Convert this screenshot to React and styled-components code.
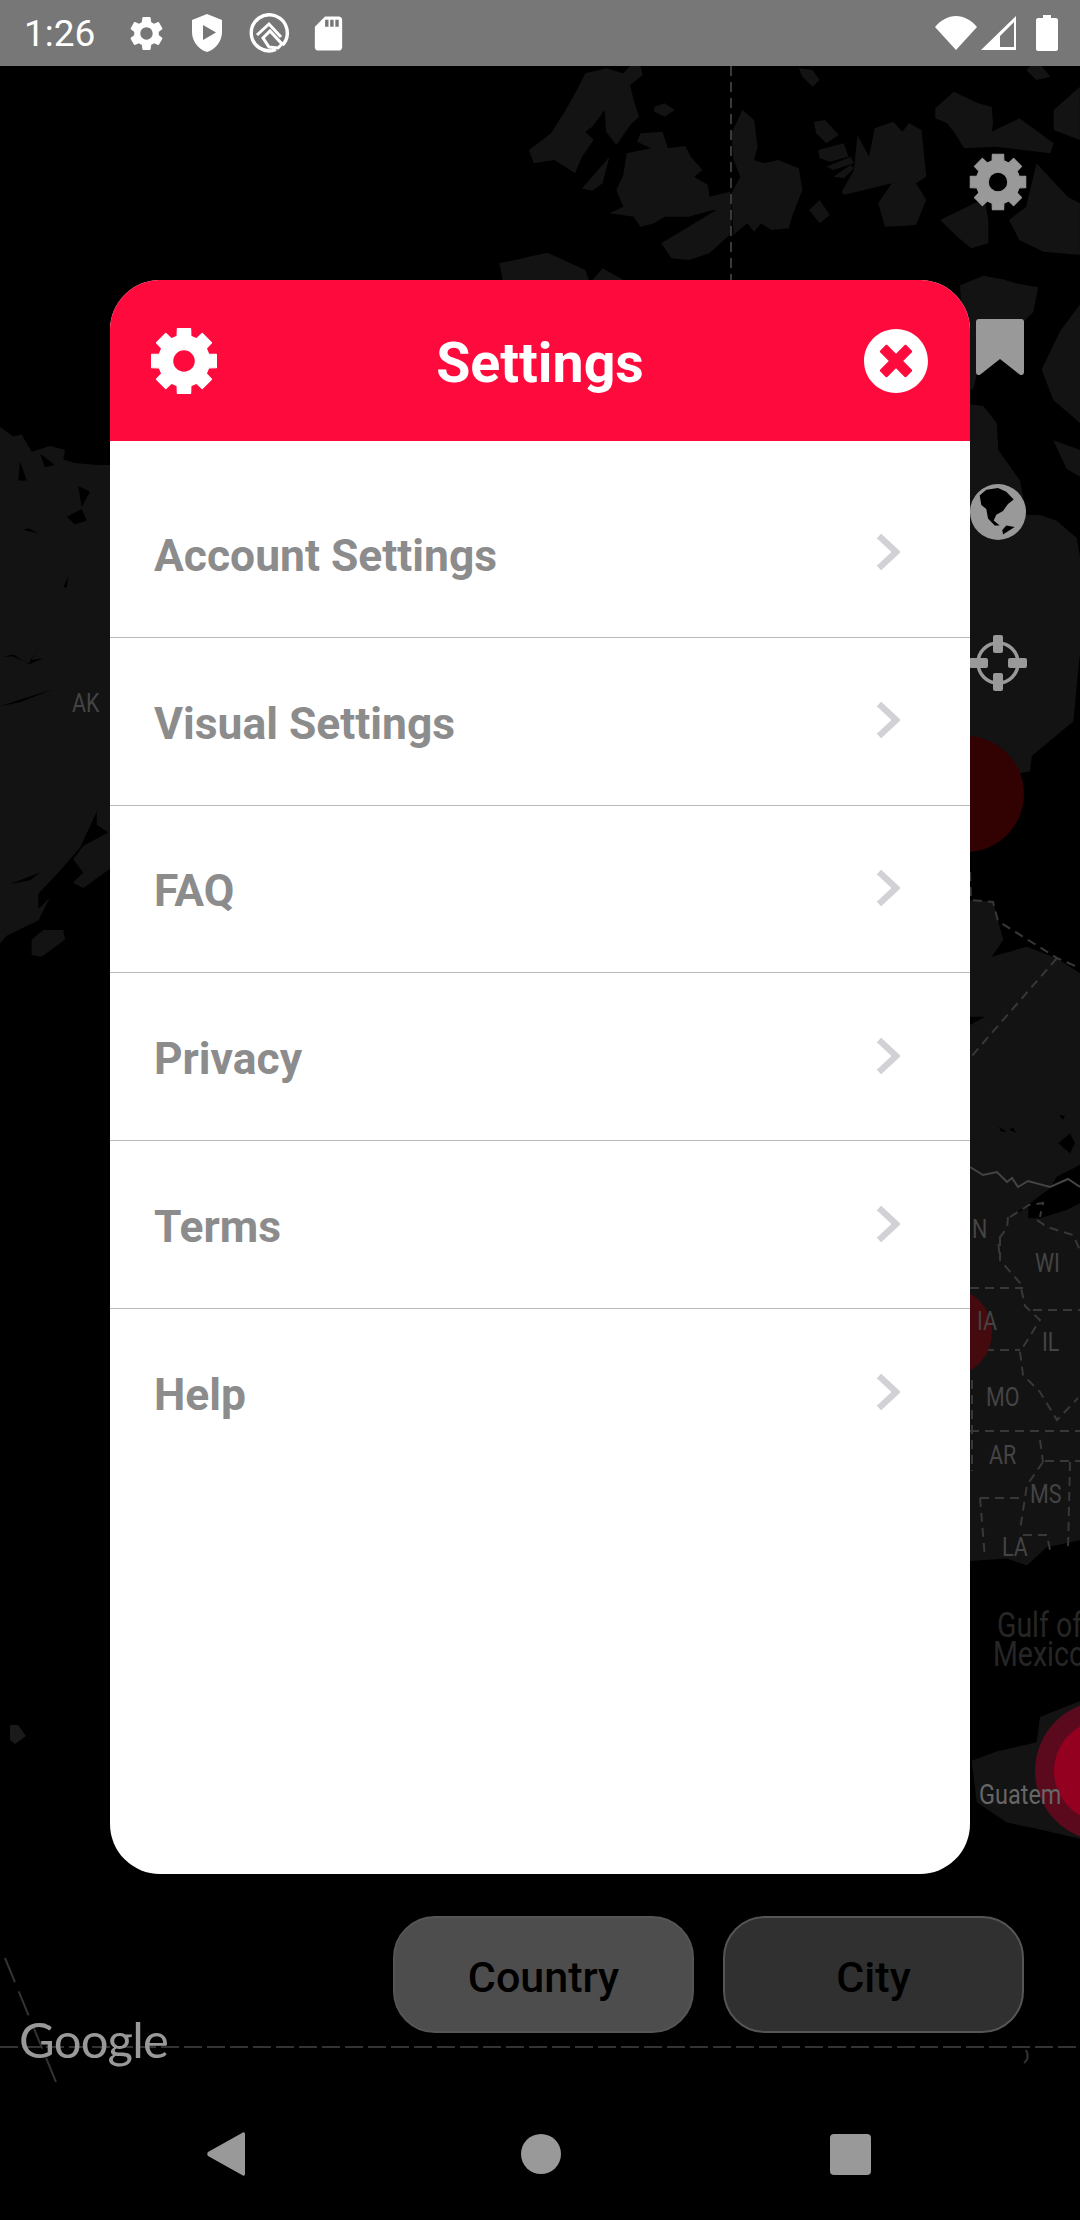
import React from 'react';
import styled, { createGlobalStyle } from 'styled-components';
import { FaTimesCircle } from 'react-icons/fa';
import { MdSettings, MdSdCard } from 'react-icons/md';

const GlobalStyle = createGlobalStyle`
  html, body {
    margin: 0;
    padding: 0;
    background: #000000;
  }
`

const Screen = styled.div`
  background-color: #000000;
  display: flex;
  flex-direction: column;
  font-family: Roboto, "Liberation Sans", sans-serif;
  height: 2220px;
  overflow: hidden;
  width: 1080px;
`

const StatusBar = styled.div`
  align-items: center;
  background-color: #777777;
  color: #ffffff;
  display: flex;
  flex-shrink: 0;
  height: 66px;
  padding: 0 22px 0 24px;
  position: relative;
  z-index: 2;
`

const Clock = styled.div`
  font-size: 37px;
  font-weight: 400;
  margin-right: 31px;
  width: 71px;
`

const StatusIcons = styled.div`
  align-items: center;
  display: flex;
  gap: 24px;
`

const SdSlot = styled.div`
  display: flex;
  margin-left: -5px;
`

const SystemIcons = styled.div`
  align-items: center;
  display: flex;
  gap: 4px;
  margin-left: auto;
`

const BatterySlot = styled.div`
  display: flex;
  margin-left: 16px;
`

const Stage = styled.div`
  display: flex;
  flex: 1;
  flex-direction: column;
  padding-top: 214px;
  position: relative;
`

const MapCanvas = styled.svg`
  height: 2154px;
  left: 0;
  position: absolute;
  top: 0;
  width: 1080px;
`

const MapControl = styled.div`
  align-items: center;
  color: #999999;
  display: flex;
  height: 60px;
  justify-content: center;
  left: 968px;
  position: absolute;
  top: ${props => props.top}px;
  width: 60px;
`

const Modal = styled.div`
  background-color: #ffffff;
  border-radius: 50px;
  display: flex;
  flex-direction: column;
  height: 1594px;
  margin-left: 110px;
  overflow: hidden;
  position: relative;
  width: 860px;
`

const ModalHeader = styled.div`
  align-items: center;
  background-color: #ff0a3c;
  color: #ffffff;
  display: flex;
  flex-shrink: 0;
  height: 161px;
  justify-content: space-between;
  padding: 0 41px 0 39px;
`

const ModalTitle = styled.h1`
  font-size: 55.5px;
  font-weight: 700;
  margin: 0 0 0 -2px;
  padding-top: 6px;
`

const SettingsList = styled.div`
  display: flex;
  flex-direction: column;
  padding-top: 29px;
`

const SettingsRow = styled.div`
  align-items: center;
  border-bottom: ${props => props.last ? 'none' : '1px solid #bbbbbb'};
  box-sizing: border-box;
  color: #8c8c8c;
  display: flex;
  height: 167.8px;
  justify-content: space-between;
  padding: 0 70px 0 44px;
`

const RowLabel = styled.span`
  font-size: 44.4px;
  font-weight: 700;
  padding-top: 5px;
`

const RowChevron = styled.svg`
  height: 38px;
  margin-bottom: 2px;
  width: 24px;
`

const ToggleRow = styled.div`
  display: flex;
  gap: 29px;
  justify-content: flex-end;
  margin-top: 42px;
  padding-right: 56px;
  position: relative;
`

const Toggle = styled.div`
  align-items: center;
  background-color: ${props => props.active ? '#4d4d4d' : '#303030'};
  border: 2px solid #555555;
  border-radius: 42px;
  box-sizing: border-box;
  color: #000000;
  display: flex;
  font-family: Roboto, "Liberation Sans", sans-serif;
  font-size: 43px;
  font-weight: 500;
  height: 117px;
  justify-content: center;
  padding-top: 4px;
  width: 301px;
`

const GoogleMark = styled.div`
  color: #999999;
  font-family: Lato, "Open Sans", sans-serif;
  font-size: 49px;
  left: 19px;
  letter-spacing: -0.8px;
  line-height: 1;
  position: absolute;
  top: 1949px;
`

const NavBar = styled.div`
  align-items: center;
  box-sizing: border-box;
  display: flex;
  flex-shrink: 0;
  height: 126px;
  justify-content: space-between;
  padding: 0 209px 6px 207px;
  position: relative;
`

const NavCircle = styled.div`
  background-color: #999999;
  border-radius: 50%;
  height: 40px;
  margin-left: 6px;
  width: 40px;
`

const NavSquare = styled.div`
  background-color: #999999;
  border-radius: 4px;
  height: 41px;
  width: 41px;
`

const rows = ['Account Settings', 'Visual Settings', 'FAQ', 'Privacy', 'Terms', 'Help']

// map shapes were traced on zoomed crops, so each group keeps its crop's scale
const fromCrop = (ox, oy, sx, sy) => pts => pts.split(' ').map(p => {
  const [x, y] = p.split(',').map(Number)
  return `${(ox + x / sx).toFixed(1)},${(oy + y / sy).toFixed(1)}`
}).join(' ')

const top = fromCrop(0, 60, 1.452, 3)
const east = fromCrop(840, 270, 3, 2.613)
const west = fromCrop(0, 400, 3, 2.613)
const lakes = fromCrop(960, 860, 3, 3)
const south = fromCrop(940, 1150, 3, 2.178)

const land = [
  top('850,40 880,25 905,40 915,18 930,18 933,45 915,75 920,120 928,170 915,195 895,255 880,215 878,150 860,200 850,215 862,240 845,290 835,340 805,300 775,310 768,270 800,220 820,155 835,100'),
  top('950,140 965,130 980,150 965,170 950,155'),
  top('930,220 962,215 970,265 995,258 1003,290 1020,330 1008,350 1028,375 1030,410 1060,395 1060,450 1035,450 1000,470 965,470 950,490 930,500 920,470 885,460 905,440 895,390 905,345 910,280 945,265 925,245'),
  top('960,550 1000,500 1040,450 1062,410 1062,520 1030,580 1000,600 975,595'),
  top('845,385 885,290 875,370 860,392'),
  top('1062,220 1078,150 1095,180 1100,260 1095,300 1110,310 1130,300 1160,325 1165,390 1150,470 1145,505 1120,510 1105,490 1095,515 1085,490 1065,525 1062,400 1075,350 1065,300'),
  top('1160,25 1180,30 1190,60 1180,80 1165,50'),
  top('1182,185 1198,180 1218,225 1200,250 1185,220'),
  top('1188,270 1225,250 1232,290 1205,305 1190,295'),
  top('1200,320 1235,290 1240,310 1210,330'),
  top('1210,350 1235,315 1240,325 1225,355'),
  top('1222,395 1240,330 1245,225 1262,290 1270,205 1297,185 1310,215 1320,190 1338,210 1345,350 1330,370 1345,420 1330,495 1285,500 1275,430 1295,370 1225,405'),
  top('1175,450 1190,420 1205,465 1190,490'),
  top('1358,145 1385,95 1420,130 1440,140 1442,190 1440,215 1480,175 1500,205 1530,250 1525,280 1465,265 1445,260 1400,265 1385,215 1375,190 1358,175'),
  top('1365,480 1415,430 1430,420 1435,480 1435,550 1410,565 1390,530'),
  top('1465,480 1490,440 1505,310 1550,410 1568,430 1568,585 1540,580 1515,575 1480,540'),
  top('1530,150 1568,80 1568,240 1530,210'),
  top('1490,30 1505,0 1525,50 1505,60'),
  top('725,610 795,578 850,630 855,660 730,660'),
  top('860,660 875,625 905,660'),
  east('360,40 430,15 490,25 530,35 595,45 580,110 510,170 430,210 400,310 380,320'),
  east('720,90 660,160 605,260 640,340 720,400'),
  east('640,445 720,470 720,540 680,520'),
  east('380,350 430,355 470,400 475,470 540,550 560,640 600,640 650,655 710,700 720,750 720,1000 700,1180 575,1270 570,1310 380,1340'),
  lakes('30,120 100,125 115,185 130,240 95,290 200,260 290,295 360,340 360,1200 30,1200'),
  south('90,0 420,0 420,850 320,865 260,905 200,890 90,895'),
  south('95,1330 170,1310 290,1290 300,1235 420,1200 420,1500 300,1480 200,1465 110,1420'),
  west('0,70 40,95 65,90 95,135 150,120 195,130 190,155 225,165 290,170 330,170 330,1225 250,1275 215,1260 150,1300 115,1360 20,1400 0,1420'),
  west('95,1410 130,1385 190,1385 195,1410 125,1455 95,1450'),
]

const holes = [
  west('0,800 160,755 60,790'),
  west('190,490 205,460 200,490'),
  west('235,225 270,240 245,280'),
  west('200,305 245,285 260,315 225,325'),
  west('30,1265 120,1235 90,1255'),
  west('115,1290 180,1230 240,1170 290,1075 290,1110 325,1130 250,1165 220,1200 250,1235 220,1260 150,1300 115,1330'),
  west('70,340 115,348 85,335'),
  west('10,670 40,670 90,690 130,675 90,680 115,650 85,690 40,665'),
  west('60,160 80,210 55,210'),
  west('120,140 165,170 135,175'),
  lakes('30,470 75,470 30,495'),
  lakes('295,850 330,820 345,850 330,880'),
  lakes('360,915 290,950 270,985 360,960'),
  lakes('150,1070 210,1030 270,985 360,940 360,1030 320,1050 240,1075 205,1075 205,1040'),
  lakes('115,800 140,815 125,815'),
  lakes('148,810 158,802 168,818'),
  lakes('298,765 315,768 308,780'),
]

const stateLines = [
  'M970 872L971 900 993 902 998 921 1057 958 1080 968',
  'M1057 958L970 1058',
  'M1010 1217L1029 1205 1043 1203 1040 1217M1037 1220L1047 1227 1073 1235 1080 1250M1008 1217L1007 1228 998 1240 1000 1260',
  'M1000 1237V1260L1020 1283 1025 1306 1040 1320 1020 1352 1023 1375 1040 1392 1057 1420 1078 1398M970 1288H1023M1033 1310H1080M970 1350H1020',
  'M970 1431H1080M972 1380V1471M1040 1440L1043 1462M1043 1462L1027 1485 1020 1530M1045 1461H1080M1070 1462L1068 1550M980 1498H1023M980 1498L985 1558M1023 1535H1047L1050 1550',
]

const gearPath = (teeth, outer, root, hole) => {
  const step = (Math.PI * 2) / teeth
  const at = (r, a) => `${(r * Math.cos(a)).toFixed(2)} ${(r * Math.sin(a)).toFixed(2)}`
  let d = ''
  for (let i = 0; i < teeth; i++) {
    const a = i * step
    d += `${i ? 'L' : 'M'}${at(root, a - 0.27)}L${at(outer, a - 0.2)}L${at(outer, a + 0.2)}L${at(root, a + 0.27)}`
  }
  return `${d}ZM${hole} 0A${hole} ${hole} 0 1 0 ${-hole} 0A${hole} ${hole} 0 1 0 ${hole} 0Z`
}

// labels on the reference map are drawn taller than wide
const MapLabel = ({ x, y, size = 21.5, stretch = 1.2, fill = '#444444', children }) => (
  <text transform={`translate(${x} ${y}) scale(1 ${stretch})`} fontSize={size} fill={fill} fontFamily="Roboto, sans-serif">{children}</text>
)

const MapBackground = () => (
  <MapCanvas viewBox="0 66 1080 2154">
    {land.map(points => <polygon key={points} points={points} fill="#131313" />)}
    {holes.map(points => <polygon key={points} points={points} fill="#000000" />)}
    <polygon points="10,1725 18,1725 26,1736 15,1744 10,1740" fill="#1a1a1a" />
    <path d="M731 66V280" stroke="#3a3a3a" strokeWidth="2" strokeDasharray="10 6" fill="none" />
    <path d="M0 2047H1080" stroke="#333333" strokeWidth="2" strokeDasharray="18 5" fill="none" />
    <path d="M5 1958L58 2087" stroke="#333333" strokeWidth="2" strokeDasharray="26 10" fill="none" />
    <path d="M1026 2050C1029 2056 1028 2060 1024 2063" stroke="#333333" strokeWidth="2" fill="none" />
    <path d="M970 1167L983 1175 997 1172 1007 1182 1012 1178 1018 1187 1028 1181 1050 1187 1068 1179 1080 1187" stroke="#444444" strokeWidth="2" fill="none" />
    {stateLines.map(d => <path key={d} d={d} stroke="#383838" strokeWidth="2" strokeDasharray="9 6" fill="none" />)}
    <circle cx="966" cy="794" r="58" fill="#320202" />
    <circle cx="947" cy="1332" r="45" fill="#450a0e" />
    <circle cx="1105" cy="1771" r="70" fill="#5a0a1c" />
    <circle cx="1105" cy="1771" r="51" fill="#940020" />
    <MapLabel x="72" y="712">AK</MapLabel>
    <MapLabel x="972" y="1238">N</MapLabel>
    <MapLabel x="1035" y="1272">WI</MapLabel>
    <MapLabel x="977" y="1330">IA</MapLabel>
    <MapLabel x="1042" y="1351">IL</MapLabel>
    <MapLabel x="986" y="1406">MO</MapLabel>
    <MapLabel x="989" y="1464">AR</MapLabel>
    <MapLabel x="1030" y="1503">MS</MapLabel>
    <MapLabel x="1002" y="1556">LA</MapLabel>
    <MapLabel x="997" y="1637" size={28.5} stretch={1.25} fill="#262626">Gulf of</MapLabel>
    <MapLabel x="993" y="1666" size={28.5} stretch={1.25} fill="#262626">Mexico</MapLabel>
    <MapLabel x="979" y="1804" size={23.5} stretch={1.15} fill="#666666">Guatem</MapLabel>
  </MapCanvas>
)

const GearIcon = ({ size, color }) => (
  <svg width={size} height={size} viewBox="-52 -52 104 104">
    <path d={gearPath(8, 49, 38, 17)} fill={color} fillRule="evenodd" stroke={color} strokeWidth="2" strokeLinejoin="round" />
  </svg>
)

const ShieldIcon = () => (
  <svg width="32" height="38" viewBox="0 0 32 38">
    <path fill="#ffffff" fillRule="evenodd" d="M16 0L31 6V18C31 27 25 35 16 38 7 35 1 27 1 18V6ZM12 11V26L25 18.5Z" />
  </svg>
)

const QIcon = () => (
  <svg width="42" height="40" viewBox="-2 0 42 40" fill="none" stroke="#ffffff" strokeWidth="3.4">
    <path d="M33.5 32A18 18 0 1 0 27 36.5" />
    <path d="M8 22L20 11 32 24" strokeWidth="3" />
    <path d="M14 25L21 18 33 31 29 35 20 34Z" strokeWidth="3" />
  </svg>
)

const WifiIcon = () => (
  <svg width="42" height="34" viewBox="0 0 42 34">
    <path fill="#ffffff" d="M0 11C6 4 13 0 21 0S36 4 42 11L21 34Z" />
  </svg>
)

const SignalIcon = () => (
  <svg width="35" height="34" viewBox="0 0 35 34">
    <path fill="#ffffff" fillRule="evenodd" d="M35 0V34H0ZM33 6L19 20V31H33Z" />
  </svg>
)

const BatteryIcon = () => (
  <svg width="22" height="36" viewBox="0 0 22 36">
    <path fill="#ffffff" d="M7 0H15V3H20C21 3 22 4 22 5V34C22 35 21 36 20 36H2C1 36 0 35 0 34V5C0 4 1 3 2 3H7Z" />
  </svg>
)

const Chevron = () => (
  <RowChevron viewBox="0 0 24 38">
    <path d="M3 3L20 19 3 35" fill="none" stroke="#d1d1d6" strokeWidth="6.5" />
  </RowChevron>
)

const BookmarkIcon = () => (
  <svg width="51" height="56" viewBox="-3 0 51 56">
    <path fill="#999999" d="M3 0H45C47 0 48 1 48 3V53C48 56 45 57 43 55L24 40 5 55C3 57 0 56 0 53V3C0 1 1 0 3 0Z" />
  </svg>
)

const GlobeIcon = () => (
  <svg width="60" height="60" viewBox="0 0 60 60">
    <circle cx="30" cy="30" r="28" fill="#999999" />
    <path fill="#000000" d="M11.7 13.5L18.3 7.8 30 5.9 38.3 9.7 45.7 17.4 40 22 35 28.9 28.3 32.7 25.7 38.4 31.7 43.4 26.7 43.4 20 36.5 18.3 27 13.3 23Z" />
    <path fill="#000000" d="M35 52.6L46.7 44.9 38.3 43.4 34.3 48Z" />
  </svg>
)

const TargetIcon = () => (
  <svg width="60" height="60" viewBox="0 0 60 60">
    <circle cx="30" cy="30" r="20" fill="none" stroke="#999999" strokeWidth="3.5" />
    <rect x="25" y="2" width="10" height="18" rx="2" fill="#999999" />
    <rect x="25" y="40" width="10" height="18" rx="2" fill="#999999" />
    <rect x="1" y="25" width="19" height="10" rx="2" fill="#999999" />
    <rect x="40" y="25" width="19" height="10" rx="2" fill="#999999" />
  </svg>
)

const BackIcon = () => (
  <svg width="38" height="44" viewBox="0 0 38 44">
    <path fill="#999999" d="M38 2V42C38 44 36 44 35 43L1 24C0 23 0 21 1 20L35 1C36 0 38 0 38 2Z" />
  </svg>
)

const App = () => (
  <Screen>
    <GlobalStyle />
    <StatusBar>
      <Clock>1:26</Clock>
      <StatusIcons>
        <MdSettings size={41} />
        <ShieldIcon />
        <QIcon />
        <SdSlot>
          <MdSdCard size={41} />
        </SdSlot>
      </StatusIcons>
      <SystemIcons>
        <WifiIcon />
        <SignalIcon />
        <BatterySlot>
          <BatteryIcon />
        </BatterySlot>
      </SystemIcons>
    </StatusBar>
    <Stage>
      <MapBackground />
      <MapControl top={86}><GearIcon size={60} color="#999999" /></MapControl>
      <MapControl top={251}><BookmarkIcon /></MapControl>
      <MapControl top={416}><GlobeIcon /></MapControl>
      <MapControl top={567}><TargetIcon /></MapControl>
      <Modal>
        <ModalHeader>
          <GearIcon size={70} color="#ffffff" />
          <ModalTitle>Settings</ModalTitle>
          <FaTimesCircle size={66} />
        </ModalHeader>
        <SettingsList>
          {rows.map((row, i) => (
            <SettingsRow key={row} last={i === rows.length - 1}>
              <RowLabel>{row}</RowLabel>
              <Chevron />
            </SettingsRow>
          ))}
        </SettingsList>
      </Modal>
      <ToggleRow>
        <Toggle active>Country</Toggle>
        <Toggle>City</Toggle>
      </ToggleRow>
      <GoogleMark>Google</GoogleMark>
    </Stage>
    <NavBar>
      <BackIcon />
      <NavCircle />
      <NavSquare />
    </NavBar>
  </Screen>
)

export default App
